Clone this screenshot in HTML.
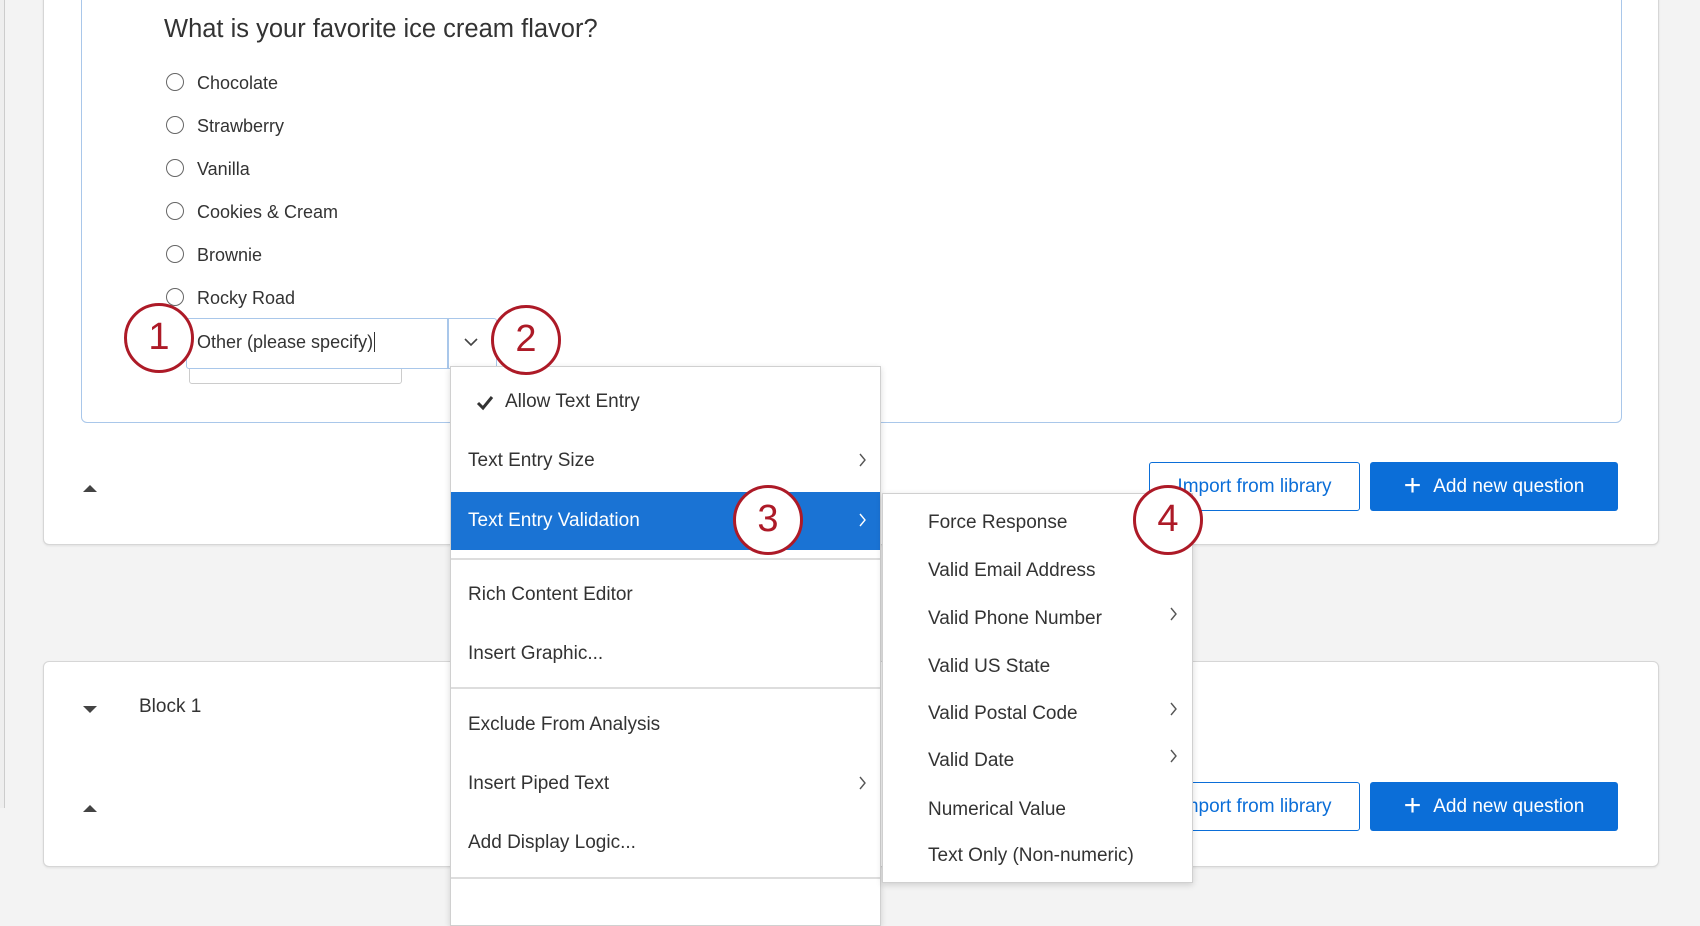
<!DOCTYPE html>
<html><head><style>
*{box-sizing:border-box;margin:0;padding:0}
body{width:1700px;height:900px;overflow:hidden;background:#f3f3f3;font-family:"Liberation Sans",sans-serif;color:#2b2b2b;position:relative}
.abs{position:absolute}
.card{position:absolute;background:#fff;border:1px solid #d6d6d6;border-radius:6px;box-shadow:0 1px 2px rgba(0,0,0,.08)}
.radio{position:absolute;width:18px;height:18px;border:1.5px solid #666;border-radius:50%}
.lbl{position:absolute;font-size:18px;color:#333}
.circ{position:absolute;width:70px;height:70px;border:3.5px solid #ad1a27;border-radius:50%;background:#fff;color:#ad1a27;font-size:38px;text-align:center;line-height:62px;font-family:"Liberation Sans",sans-serif}
.mi{position:absolute;left:0;right:0;font-size:19px;color:#333;padding-left:17px}
.chev{position:absolute;width:10px;height:16px}
.btn{position:absolute;height:49px;border-radius:3px;font-size:19px;line-height:47px;text-align:center}
.caret{position:absolute;width:0;height:0;border-left:7px solid transparent;border-right:7px solid transparent}
</style></head><body>
<div class="abs" style="left:0;top:0;width:5px;height:808px;border-right:1px solid #ccc;background:#eee"></div>
<div class="card" style="left:43px;top:-10px;width:1616px;height:555px"></div>
<div class="abs" style="left:81px;top:-10px;width:1541px;height:433px;border:1.5px solid #a9c7ea;border-radius:6px;background:#fff"></div>
<div class="abs" style="left:164px;top:15px;font-size:25.5px;color:#333">What is your favorite ice cream flavor?</div>
<div class="radio" style="left:166px;top:73px"></div><div class="lbl" style="left:197px;top:73px">Chocolate</div>
<div class="radio" style="left:166px;top:116px"></div><div class="lbl" style="left:197px;top:116px">Strawberry</div>
<div class="radio" style="left:166px;top:159px"></div><div class="lbl" style="left:197px;top:159px">Vanilla</div>
<div class="radio" style="left:166px;top:202px"></div><div class="lbl" style="left:197px;top:202px">Cookies &amp; Cream</div>
<div class="radio" style="left:166px;top:245px"></div><div class="lbl" style="left:197px;top:245px">Brownie</div>
<div class="radio" style="left:166px;top:288px"></div><div class="lbl" style="left:197px;top:288px">Rocky Road</div>
<div class="abs" style="left:189px;top:360px;width:213px;height:24px;border:1.5px solid #ccc;border-radius:3px;background:#fff"></div>
<div class="abs" style="left:186px;top:318px;width:311px;height:51px;border:1.5px solid #a9c7ea;border-radius:3px;background:#fff"></div>
<div class="abs" style="left:447px;top:318px;width:1.5px;height:51px;background:#a9c7ea"></div>
<div class="lbl" style="left:197px;top:332px">Other (please specify)<span style="border-left:1.5px solid #333;margin-left:1px"></span></div>
<svg class="abs" style="left:463px;top:336px" width="16" height="12"><path d="M2 3 L8 9 L14 3" fill="none" stroke="#444" stroke-width="1.6"/></svg>
<div class="caret" style="left:83px;top:485px;border-bottom:7px solid #444"></div>
<div class="btn" style="left:1149px;top:462px;width:211px;border:1.5px solid #0b6ed8;color:#0b6ed8;background:#fff">Import from library</div>
<div class="btn" style="left:1370px;top:462px;width:248px;background:#0b6ed8;color:#fff"><span style="font-size:30px;font-weight:300;vertical-align:-3px;margin-right:12px">+</span>Add new question</div>
<div class="card" style="left:43px;top:661px;width:1616px;height:206px"></div>
<div class="caret" style="left:83px;top:706px;border-top:7px solid #444"></div>
<div class="abs" style="left:139px;top:696px;font-size:19px;color:#333">Block 1</div>
<div class="caret" style="left:83px;top:805px;border-bottom:7px solid #444"></div>
<div class="btn" style="left:1149px;top:782px;width:211px;border:1.5px solid #0b6ed8;color:#0b6ed8;background:#fff">Import from library</div>
<div class="btn" style="left:1370px;top:782px;width:248px;background:#0b6ed8;color:#fff"><span style="font-size:30px;font-weight:300;vertical-align:-3px;margin-right:12px">+</span>Add new question</div>
<!-- menu 1 -->
<div class="abs" style="left:450px;top:366px;width:431px;height:560px;background:#fff;border:1px solid #d0d0d0;box-shadow:0 2px 6px rgba(0,0,0,.15)">
 <div class="mi" style="top:24px;padding-left:54px">Allow Text Entry</div>
 <svg class="abs" style="left:25px;top:28px" width="18" height="16"><path d="M2 8 L7 13 L16 2" fill="none" stroke="#333" stroke-width="3"/></svg>
 <div class="mi" style="top:83px">Text Entry Size</div><svg class="chev" style="left:407px;top:85px"><path d="M2 2 L7 8 L2 14" fill="none" stroke="#555" stroke-width="1.4"/></svg>
 <div class="abs" style="left:0;right:0;top:125px;height:58px;background:#1a73d4"></div>
 <div class="mi" style="top:143px;color:#fff">Text Entry Validation</div><svg class="chev" style="left:407px;top:145px"><path d="M2 2 L7 8 L2 14" fill="none" stroke="#fff" stroke-width="1.4"/></svg>
 <div class="abs" style="left:0;right:0;top:191px;height:2px;background:#ddd"></div>
 <div class="mi" style="top:217px">Rich Content Editor</div>
 <div class="mi" style="top:276px">Insert Graphic...</div>
 <div class="abs" style="left:0;right:0;top:320px;height:2px;background:#ddd"></div>
 <div class="mi" style="top:347px">Exclude From Analysis</div>
 <div class="mi" style="top:406px">Insert Piped Text</div><svg class="chev" style="left:407px;top:408px"><path d="M2 2 L7 8 L2 14" fill="none" stroke="#555" stroke-width="1.4"/></svg>
 <div class="mi" style="top:465px">Add Display Logic...</div>
 <div class="abs" style="left:0;right:0;top:510px;height:2px;background:#ddd"></div>
</div>
<!-- submenu -->
<div class="abs" style="left:882px;top:493px;width:311px;height:390px;background:#fff;border:1px solid #d0d0d0;box-shadow:0 2px 6px rgba(0,0,0,.15)">
 <div class="mi" style="top:18px;padding-left:45px">Force Response</div>
 <div class="mi" style="top:66px;padding-left:45px">Valid Email Address</div>
 <div class="mi" style="top:114px;padding-left:45px">Valid Phone Number</div><svg class="chev" style="left:286px;top:112px"><path d="M2 2 L7 8 L2 14" fill="none" stroke="#555" stroke-width="1.4"/></svg>
 <div class="mi" style="top:162px;padding-left:45px">Valid US State</div>
 <div class="mi" style="top:209px;padding-left:45px">Valid Postal Code</div><svg class="chev" style="left:286px;top:207px"><path d="M2 2 L7 8 L2 14" fill="none" stroke="#555" stroke-width="1.4"/></svg>
 <div class="mi" style="top:256px;padding-left:45px">Valid Date</div><svg class="chev" style="left:286px;top:254px"><path d="M2 2 L7 8 L2 14" fill="none" stroke="#555" stroke-width="1.4"/></svg>
 <div class="mi" style="top:305px;padding-left:45px">Numerical Value</div>
 <div class="mi" style="top:351px;padding-left:45px">Text Only (Non-numeric)</div>
</div>
<div class="circ" style="left:124px;top:303px">1</div>
<div class="circ" style="left:491px;top:305px">2</div>
<div class="circ" style="left:733px;top:485px">3</div>
<div class="circ" style="left:1133px;top:485px">4</div>
</body></html>
